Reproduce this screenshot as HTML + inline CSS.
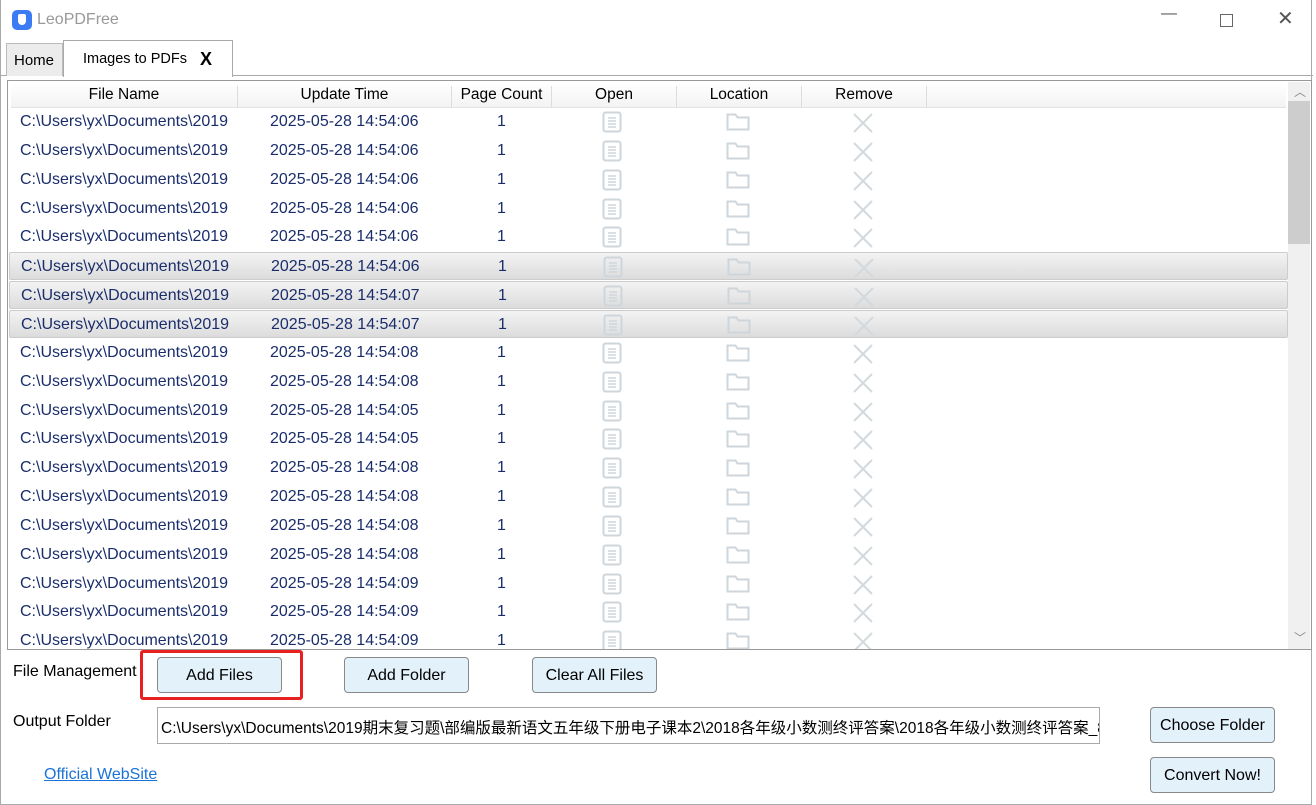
<!DOCTYPE html>
<html><head><meta charset="utf-8"><style>
*{box-sizing:border-box;margin:0;padding:0}
body{width:1316px;height:805px;background:#fff;font-family:"Liberation Sans","Noto Sans CJK SC",sans-serif;font-size:15px;color:#000;position:relative;overflow:hidden}
.win{position:absolute;left:0;top:0;width:1312px;height:805px;border:1px solid #aaa;border-top:none;background:#fff}
.title{position:absolute;left:36px;top:11px;color:#999;font-size:16px}
.logo{position:absolute;left:11px;top:10px;width:20px;height:20px;border-radius:5px;background:#3b7cf5}
.logo:after{content:"";position:absolute;left:6px;top:4px;width:8px;height:11px;background:#fff;border-radius:2px 2px 4px 4px}
.ctl{position:absolute;top:8px;color:#555;font-size:16px}
.tabbar{position:absolute;left:0;top:75px;width:1312px;border-top:1px solid #aaa}
.tab1{position:absolute;left:5px;top:43px;width:57px;height:33px;background:#ececec;border:1px solid #bbb;border-bottom:none;padding:8px 0 0 7px;font-size:15px}
.tab2{position:absolute;left:62px;top:40px;width:170px;height:37px;background:#fff;border:1px solid #aaa;border-bottom:none;padding:10px 0 0 19px;font-size:14.5px}
.tab2 b{position:absolute;left:136px;top:8px;font-size:18px}
.panel{position:absolute;left:6px;top:80px;width:1305px;height:570px;border:1px solid #999;overflow:hidden}
.hdr{position:absolute;left:3px;top:2px;height:25px;width:1275px;background:linear-gradient(#fff,#f3f3f3);border-bottom:1px solid #e4e4e4;font-size:15.5px}
.hdr span{position:absolute;top:3px;text-align:center;border-right:1px solid #ddd;height:22px}
.row{position:absolute;left:1px;width:1279px;height:28px;color:#1a2d6b;font-size:16px}
.row.sel{background:linear-gradient(#f3f3f3,#dcdcdc);border:1px solid #ccc;border-radius:2px}
.row span{position:absolute;top:5px}
.sb{position:absolute;left:1280px;top:1px;width:22px;height:567px;background:#f0f0f0}
.thumb{position:absolute;left:1280px;top:20px;width:22px;height:143px;background:#cdcdcd}
.btn{position:absolute;height:36px;background:#e3f1fb;border:1px solid #888;border-radius:4px;text-align:center;line-height:36px;font-size:16px}
.lbl{position:absolute;font-size:16px}
</style></head><body>
<div class="win">
<div class="logo"></div><div class="title">LeoPDFree</div>
<div class="ctl" style="left:1160px;top:5px">—</div>
<div style="position:absolute;left:1219px;top:14px;width:13px;height:13px;border:1px solid #666"></div>
<div class="ctl" style="left:1276px;top:6px;font-size:20px;font-weight:300">✕</div>
<div class="tabbar"></div>
<div class="tab1">Home</div>
<div class="tab2">Images to PDFs<b>X</b></div>
<div class="panel">
 <div class="hdr">
  <span style="left:0;width:227px">File Name</span>
  <span style="left:227px;width:214px">Update Time</span>
  <span style="left:441px;width:100px">Page Count</span>
  <span style="left:541px;width:125px">Open</span>
  <span style="left:666px;width:125px">Location</span>
  <span style="left:791px;width:125px">Remove</span>
 </div>
 <div id="rows"></div>
 <div class="sb"></div><div class="thumb"></div>
 <div style="position:absolute;left:1286px;top:2px;color:#888;font-size:12px">︿</div>
 <div style="position:absolute;left:1286px;top:548px;color:#888;font-size:12px">﹀</div>
</div>
<div class="lbl" style="left:12px;top:663px">File Management</div>
<div style="position:absolute;left:139px;top:650px;width:163px;height:50px;border:3px solid #e82020;border-radius:3px"></div>
<div class="btn" style="left:156px;top:657px;width:125px">Add Files</div>
<div class="btn" style="left:343px;top:657px;width:125px">Add Folder</div>
<div class="btn" style="left:531px;top:657px;width:125px">Clear All Files</div>
<div class="lbl" style="left:12px;top:713px">Output Folder</div>
<div style="position:absolute;left:156px;top:707px;width:943px;height:37px;border:1px solid #aaa;padding:8px 0 0 3px;white-space:nowrap;overflow:hidden;font-size:15.5px">C:\Users\yx\Documents\2019期末复习题\部编版最新语文五年级下册电子课本2\2018各年级小数测终评答案\2018各年级小数测终评答案_8</div>
<div class="btn" style="left:1149px;top:707px;width:125px">Choose Folder</div>
<div class="btn" style="left:1149px;top:757px;width:125px">Convert Now!</div>
<div class="lbl" style="left:43px;top:766px;color:#1a73d9;text-decoration:underline">Official WebSite</div>
</div>
<script>
var t=["06","06","06","06","06","06","07","07","08","08","05","05","08","08","08","08","09","09","09"];
var ic='<svg width="20" height="22" viewBox="0 0 20 22" style="position:absolute;left:593px;top:3px"><rect x="1.5" y="1.5" width="17" height="19" rx="2" fill="none" stroke="#cfd6db" stroke-width="2"/><path d="M6 7h8M6 10h8M6 13h8M6 16h8" stroke="#cfd6db" stroke-width="1.5"/></svg>'+
'<svg width="24" height="20" viewBox="0 0 24 20" style="position:absolute;left:717px;top:4px"><path d="M1.5 3.5v14h21v-12h-11l-2-3h-8z" fill="none" stroke="#cfd6db" stroke-width="2"/></svg>'+
'<svg width="22" height="22" viewBox="0 0 22 22" style="position:absolute;left:843px;top:4px"><path d="M2 2l18 18M20 2L2 20" stroke="#d3d9dd" stroke-width="2"/></svg>';
var h="";
for(var i=0;i<19;i++){var y=27+i*28.85;var s=(i>=5&&i<=7)?" sel":"";
h+='<div class="row'+s+'" style="top:'+y+'px"><span style="left:11px">C:\\Users\\yx\\Documents\\2019</span><span style="left:261px">2025-05-28 14:54:'+t[i]+'</span><span style="left:488px">1</span>'+ic+'</div>';}
document.getElementById("rows").innerHTML=h;
</script>
</body></html>
